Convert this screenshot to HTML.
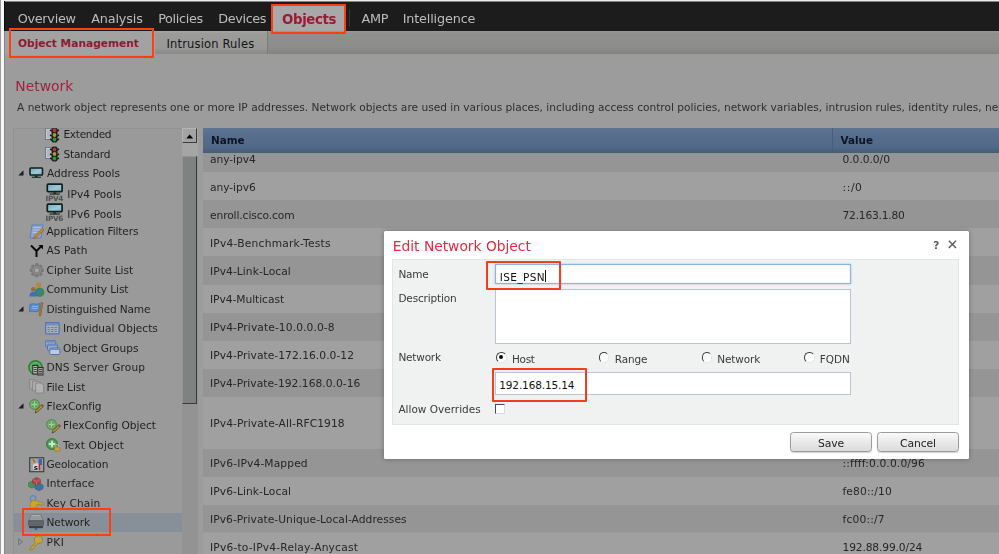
<!DOCTYPE html>
<html>
<head>
<meta charset="utf-8">
<title>Edit Network Object</title>
<style>
html,body{margin:0;padding:0;}
body{width:999px;height:554px;overflow:hidden;position:relative;background:#9c9c9c;font-family:"DejaVu Sans","Liberation Sans",sans-serif;font-size:11px;color:#222;}
.abs{position:absolute;}
#edgeL0{left:0;top:0;width:1px;height:554px;background:#9c9c9c;}
#edgeL1{left:1px;top:0;width:3px;height:554px;background:#f7f7f7;}
#edgeL2{left:4px;top:1px;width:1px;height:553px;background:linear-gradient(#0c0c0c 0,#0c0c0c 30px,#868686 30px);}
#edgeT{left:0;top:0;width:999px;height:1px;background:#ebebeb;}
#edgeT2{left:0;top:1px;width:999px;height:1px;background:#858585;}
#topbar{left:5px;top:2px;width:994px;height:29.300px;background:#1b1c1b;}
#topbar span{position:absolute;top:8.500px;font-size:12.800px;line-height:16px;color:#bdbdbd;white-space:nowrap;}
#objtab{left:272px;top:4px;width:74px;height:28px;background:#a8a8a8;}
#objtab span{position:absolute;left:10px;top:8.300px;font-size:13.300px;line-height:16px;font-weight:bold;color:#9a1b33;letter-spacing:-0.340px;}
#subnav{left:5px;top:31.300px;width:994px;height:22.500px;background:linear-gradient(#999a98 0,#90918f 10%,#8d8e8c 65%,#848583 100%);}
#subtab2{left:155px;top:31.300px;width:112px;height:22.500px;background:linear-gradient(#a6a7a5 0,#9b9c9a 10%,#989997 72%,#8e8f8d 90%,#8a8b89 100%);}
#subtab1{left:5px;top:31.300px;width:150px;height:23.500px;background:#a2a2a2;}
#subnav span,#subtab1 span{position:absolute;white-space:nowrap;line-height:14px;}
.redbox{position:absolute;border:2.400px solid #ff3f10;box-sizing:border-box;}
#h1{left:15.300px;top:76.500px;font-size:13.900px;line-height:18px;color:#a3213f;}
#desc{left:17px;top:100.500px;font-size:10.620px;line-height:14px;color:#2e2e2e;white-space:nowrap;}
#side{left:13px;top:127.500px;width:169px;height:427px;overflow:hidden;background:#9a9a9a;box-sizing:border-box;border-left:1px solid #919191;border-top:1px solid #939393;}
.it{white-space:nowrap;font-size:10.600px;line-height:14px;color:#1f1f1f;}
.ic{line-height:0;}
.ic svg{display:block;}
#sel{left:14px;top:513px;width:168px;height:19.200px;background:#878f98;}
#sbtrack{left:182.200px;top:128px;width:15.400px;height:426px;background:linear-gradient(#a5a5a5 0,#a5a5a5 28px,#939393 28px);}
#sbup{left:182.200px;top:128.200px;width:14.800px;height:15.300px;background:#a3a3a3;box-sizing:border-box;border-style:solid;border-width:1px 1.500px 1.500px 1px;border-color:#b4b4b4 #3b3b3b #3b3b3b #b4b4b4;}
#sbthumb{left:182.200px;top:155.500px;width:14.800px;height:248.300px;background:#7e8281;box-sizing:border-box;border-style:solid;border-width:1px 1.500px 1.500px 1px;border-color:#929594 #3a3a3a #3a3a3a #929594;}
#thead{left:202.500px;top:127.800px;width:797px;height:25.400px;background:linear-gradient(#5d7492 0,#566d8b 30%,#526988 75%,#475b77 100%);}
#thead span{position:absolute;top:5.500px;font-size:10.400px;line-height:14px;font-weight:bold;color:#0d1424;}
.row{position:absolute;left:202.500px;width:797px;}
.row span{position:absolute;font-size:10.700px;line-height:14px;color:#262626;white-space:nowrap;}
.ra{background:#a0a0a0;}
.rb{background:#959595;}
#dlg{left:383.700px;top:230.700px;width:585.300px;height:228.800px;border-radius:1.500px;background:#fff;box-shadow:0 0 5px rgba(0,0,0,.3);}
#dlgtitle{left:9.100px;top:6px;font-size:13.800px;line-height:18px;color:#e8283f;white-space:nowrap;}
#dlgbody{left:8.800px;top:28.800px;width:566.500px;height:165.500px;background:#eff2f0;border:1px solid #e2e6e3;box-sizing:border-box;}
.lbl{position:absolute;font-size:10.500px;line-height:14px;color:#3a3a3a;white-space:nowrap;}
.inp{position:absolute;background:#fff;border:1px solid #b9c4d2;box-sizing:border-box;}
.inp span{position:absolute;left:4.500px;font-size:10.500px;line-height:14px;color:#111;white-space:nowrap;}
.radio{position:absolute;width:10.500px;height:10.500px;border-radius:50%;background:#fff;box-sizing:border-box;border:1.500px solid;border-color:#3c3c3c #e6e6e6 #e6e6e6 #3c3c3c;transform:rotate(0deg);}
.btn{position:absolute;height:20px;box-sizing:border-box;border:1px solid #9c9c9c;border-radius:3.500px;background:linear-gradient(#fafafa,#e9e9e9 50%,#dcdcdc);font-size:10.800px;color:#222;text-align:center;line-height:21px;letter-spacing:-0.130px;box-shadow:0 1px 1px rgba(0,0,0,.18);}
#wrap{position:absolute;left:0;top:0;width:999px;height:554px;overflow:hidden;filter:blur(0.450px);}
</style>
</head>
<body>
<div id="wrap">
<svg width="0" height="0" style="position:absolute"><defs><linearGradient id="mg" x1="0" y1="0" x2="1" y2="1"><stop offset="0" stop-color="#6fa6bb"/><stop offset="0.550" stop-color="#9cc9d6"/><stop offset="1" stop-color="#7fb3c6"/></linearGradient></defs></svg>
<div class="abs" id="topbar">
<span style="left:12.700px;letter-spacing:-0.280px">Overview</span>
<span style="left:86.200px;letter-spacing:-0.150px">Analysis</span>
<span style="left:153.200px;letter-spacing:-0.350px">Policies</span>
<span style="left:213.200px;letter-spacing:-0.350px">Devices</span>
<span style="left:356.500px;letter-spacing:-0.250px">AMP</span>
<span style="left:397.700px;letter-spacing:-0.160px">Intelligence</span>
</div>
<div class="abs" id="objtab"><span>Objects</span></div>
<div class="abs" style="left:349px;top:9px;width:1px;height:18px;background:#363636"></div>
<div class="abs" id="subnav"></div>
<div class="abs" id="subtab2"></div>
<div class="abs" style="left:166.500px;top:36.700px;font-size:11.500px;line-height:14px;letter-spacing:0.160px;color:#141414;white-space:nowrap;z-index:2">Intrusion Rules</div>
<div class="abs" id="subtab1"><span style="left:13px;top:5.500px;font-size:10.650px;font-weight:bold;color:#8e1a30;">Object Management</span></div>
<div class="abs" style="left:267px;top:31.300px;width:1px;height:22.500px;background:#7c7c7c"></div>
<div class="abs" id="edgeT"></div><div class="abs" id="edgeT2"></div>
<div class="abs" id="edgeL0"></div><div class="abs" id="edgeL1"></div><div class="abs" id="edgeL2"></div>
<div class="redbox" style="left:271.300px;top:3.700px;width:75px;height:30.200px;border-width:2.600px"></div>
<div class="redbox" style="left:9.200px;top:28.100px;width:145px;height:29.600px;border-width:2.500px"></div>
<div class="abs" id="h1">Network</div>
<div class="abs" id="desc">A network object represents one or more IP addresses. Network objects are used in various places, including access control policies, network variables, intrusion rules, identity rules, network</div>
<div class="abs" id="side"></div>
<div class="abs" id="sel"></div>
<div class="abs ic" style="left:45px;top:127px;clip-path:inset(1.3px 0 0 0)"><svg width="16" height="16" viewBox="0 0 16 16"><rect x="0.5" y="1.5" width="8" height="11" fill="#c9ccd1" stroke="#6e7787" stroke-width="1"/><path d="M2 4h4M2 6h4M2 8h4M2 10h4" stroke="#8b93a1" stroke-width="0.8"/><rect x="6.5" y="0.5" width="6" height="15" rx="2" fill="#1b1b1b"/><path d="M5 3l2 1M5 8l2 1M5 12l2 1M14 3l-2 1M14 8l-2 1M14 12l-2 1" stroke="#1b1b1b" stroke-width="1.4"/><circle cx="9.5" cy="3.5" r="1.9" fill="#b3323a"/><circle cx="9.5" cy="8" r="1.9" fill="#a99a2e"/><circle cx="9.5" cy="12.5" r="1.9" fill="#2f9632"/></svg></div>
<div class="abs it" style="left:63.5px;top:127.23px;letter-spacing:-0.32px">Extended</div>
<div class="abs ic" style="left:45px;top:145.5px"><svg width="16" height="16" viewBox="0 0 16 16"><rect x="0.5" y="1.5" width="8" height="11" fill="#c9ccd1" stroke="#6e7787" stroke-width="1"/><path d="M2 4h4M2 6h4M2 8h4M2 10h4" stroke="#8b93a1" stroke-width="0.8"/><rect x="6.5" y="0.5" width="6" height="15" rx="2" fill="#1b1b1b"/><path d="M5 3l2 1M5 8l2 1M5 12l2 1M14 3l-2 1M14 8l-2 1M14 12l-2 1" stroke="#1b1b1b" stroke-width="1.4"/><circle cx="9.5" cy="3.5" r="1.9" fill="#b3323a"/><circle cx="9.5" cy="8" r="1.9" fill="#a99a2e"/><circle cx="9.5" cy="12.5" r="1.9" fill="#2f9632"/></svg></div>
<div class="abs it" style="left:63.5px;top:146.73px;letter-spacing:-0.18px">Standard</div>
<div class="abs ic" style="left:29px;top:166.5px"><svg width="16" height="12" viewBox="0 0 16 12"><rect x="1" y="1" width="12.500" height="7" rx="0.800" fill="url(#mg)" stroke="#10201f" stroke-width="1.600"/><rect x="6" y="8.700" width="2.600" height="1.200" fill="#10201f"/><rect x="2.700" y="9.700" width="9.200" height="1.100" fill="#10201f"/></svg></div>
<div class="abs it" style="left:47px;top:166.03px;letter-spacing:0px">Address Pools</div>
<div class="abs ic" style="left:46px;top:181.7px"><svg width="19" height="21" viewBox="0 0 19 21"><rect x="1.300" y="2.200" width="14.800" height="7.400" rx="0.800" fill="url(#mg)" stroke="#10201f" stroke-width="1.700"/><rect x="7.200" y="10.400" width="3" height="1.300" fill="#10201f"/><rect x="3.600" y="11.500" width="10.200" height="1.100" fill="#10201f"/><text x="-0.500" y="19.300" font-family="DejaVu Sans,sans-serif" font-weight="bold" font-size="7.300" fill="#505050" textLength="17.800" lengthAdjust="spacing">IPV4</text></svg></div>
<div class="abs it" style="left:67.3px;top:187.23px;letter-spacing:0.09px">IPv4 Pools</div>
<div class="abs ic" style="left:46px;top:201.7px"><svg width="19" height="21" viewBox="0 0 19 21"><rect x="1.300" y="2.200" width="14.800" height="7.400" rx="0.800" fill="url(#mg)" stroke="#10201f" stroke-width="1.700"/><rect x="7.200" y="10.400" width="3" height="1.300" fill="#10201f"/><rect x="3.600" y="11.500" width="10.200" height="1.100" fill="#10201f"/><text x="-0.500" y="19.300" font-family="DejaVu Sans,sans-serif" font-weight="bold" font-size="7.300" fill="#505050" textLength="17.800" lengthAdjust="spacing">IPV6</text></svg></div>
<div class="abs it" style="left:67.3px;top:206.73px;letter-spacing:0.09px">IPv6 Pools</div>
<div class="abs ic" style="left:28.5px;top:223.5px"><svg width="16" height="16" viewBox="0 0 16 16"><path d="M3 1h11l-2 13H1z" fill="#8da4cf" stroke="#5f7fbe" stroke-width="1"/><path d="M4.5 3.5h7M4 6h7M3.6 8.5h7" stroke="#b9c6e0" stroke-width="0.8"/><path d="M13.5 4.5l1.5 1.5-8 7.5-2.5 1 .8-2.6z" fill="#c98a2b" stroke="#8a5a17" stroke-width="0.6"/></svg></div>
<div class="abs it" style="left:46.5px;top:224.23px;letter-spacing:-0.13px">Application Filters</div>
<div class="abs ic" style="left:29.5px;top:243.5px"><svg width="14" height="14" viewBox="0 0 14 14"><path d="M1 1.5l5.5 5.5v6M6.5 7l5-5" fill="none" stroke="#0a0a0a" stroke-width="2"/><path d="M8.5 1h4.5v4.5z" fill="#0a0a0a"/></svg></div>
<div class="abs it" style="left:46.5px;top:243.23px;letter-spacing:0.07px">AS Path</div>
<div class="abs ic" style="left:28.5px;top:263px"><svg width="16" height="16" viewBox="0 0 16 16"><g transform="translate(7.800 7.300)"><g fill="#787878"><rect x="-1.700" y="-7" width="3.400" height="14" rx="0.900"/><rect x="-1.700" y="-7" width="3.400" height="14" rx="0.900" transform="rotate(45)"/><rect x="-1.700" y="-7" width="3.400" height="14" rx="0.900" transform="rotate(90)"/><rect x="-1.700" y="-7" width="3.400" height="14" rx="0.900" transform="rotate(135)"/></g><circle r="5.500" fill="#7c7c7c"/><circle r="4.300" fill="#8e8e8e"/><circle r="3.300" fill="#808080"/><circle r="2.100" fill="#a4a4a4"/></g></svg></div>
<div class="abs it" style="left:46.5px;top:263.23px;letter-spacing:-0.02px">Cipher Suite List</div>
<div class="abs ic" style="left:28.5px;top:282px"><svg width="16" height="16" viewBox="0 0 16 16"><circle cx="9.500" cy="3.300" r="2.700" fill="#b8863a"/><path d="M5.500 12c0-4.200 1.800-5.800 4.200-5.800s4.800 1.600 4.800 5.800z" fill="#5a8d4a"/><circle cx="10.800" cy="10.300" r="4.600" fill="#3a8a48"/><path d="M8 8.500c1.200-1.800 3.800-2 5.200-.5-.3 1.200-1 1.500-1.800 1.700-.2 1.500-.8 2.800-2 3.800-1.200-1-1.800-3-1.400-5z" fill="#3a7bb0"/><circle cx="4.300" cy="7.300" r="2.300" fill="#9a6a40"/><path d="M0.300 14.500c0-3.200 1.700-4.700 4-4.700s4 1.500 4 4.700z" fill="#3b70b5"/></svg></div>
<div class="abs it" style="left:46.5px;top:282.23px;letter-spacing:-0.09px">Community List</div>
<div class="abs ic" style="left:28.5px;top:302px"><svg width="16" height="15" viewBox="0 0 16 15"><path d="M1 2.500c3-2 6 1 10-1l-1.200 7.500c-4 2-6.500-1-9.300 1z" fill="#5b8fd0" stroke="#3d69ad" stroke-width="0.700"/><path d="M3 4.500c2-.8 4 .6 6-.2M2.800 6.500c2-.8 4 .6 6-.2" stroke="#9cc0ea" stroke-width="0.800" fill="none"/><path d="M12.300 0.500l1.700.4-2.300 13-1.700-.4z" fill="#b07a2e" stroke="#7b5219" stroke-width="0.500"/></svg></div>
<div class="abs it" style="left:46.5px;top:302.03px;letter-spacing:-0.17px">Distinguished Name</div>
<div class="abs ic" style="left:45px;top:322px"><svg width="15" height="13" viewBox="0 0 15 13"><rect x="0.600" y="0.600" width="13.500" height="11.300" rx="1" fill="#aab1be" stroke="#5274b0" stroke-width="1.300"/><rect x="1.200" y="1.200" width="12.300" height="2.300" fill="#6e8cc4"/><path d="M2.500 5.500h2.500M6 5.500h2.500M9.500 5.500h2.500M2.500 7.500h2.500M6 7.500h2.500M9.500 7.500h2.500M2.500 9.500h2.500M6 9.500h2.500M9.500 9.500h2.500" stroke="#6f7c94" stroke-width="1"/></svg></div>
<div class="abs it" style="left:63px;top:321.23px;letter-spacing:-0.01px">Individual Objects</div>
<div class="abs ic" style="left:45px;top:340px"><svg width="16" height="16" viewBox="0 0 16 16"><rect x="0.600" y="0.600" width="10" height="6.500" rx="0.800" fill="#a3adbe" stroke="#5274b0" stroke-width="1"/><rect x="0.600" y="0.600" width="10" height="2" fill="#6e8cc4"/><rect x="2.600" y="4.200" width="10" height="6.500" rx="0.800" fill="#a3adbe" stroke="#5274b0" stroke-width="1"/><rect x="2.600" y="4.200" width="10" height="2" fill="#6e8cc4"/><rect x="4.800" y="8" width="10" height="6.500" rx="0.800" fill="#c4c9d2" stroke="#5274b0" stroke-width="1"/><rect x="4.800" y="8" width="10" height="2" fill="#6e8cc4"/></svg></div>
<div class="abs it" style="left:63px;top:340.93px;letter-spacing:-0.02px">Object Groups</div>
<div class="abs ic" style="left:28.2px;top:359.5px"><svg width="16" height="16" viewBox="0 0 16 16"><circle cx="7.500" cy="7.500" r="7.400" fill="#2e8238"/><circle cx="7.500" cy="7.500" r="5.700" fill="#68b466"/><circle cx="7.500" cy="7.500" r="4" fill="#429648"/><rect x="4.800" y="5.500" width="5" height="8.500" fill="#b9b9b9" stroke="#2a2a2a" stroke-width="1"/><rect x="9.800" y="7.500" width="5.200" height="7.500" fill="#a9a9a9" stroke="#2a2a2a" stroke-width="1"/><path d="M5.800 7.500h3M5.800 9.500h3M5.800 11.500h3M10.800 9.500h3.200M10.800 11.500h3.200M10.800 13.300h3.200" stroke="#333" stroke-width="0.900"/></svg></div>
<div class="abs it" style="left:46.5px;top:360.03px;letter-spacing:0.13px">DNS Server Group</div>
<div class="abs ic" style="left:28.5px;top:379px"><svg width="16" height="15" viewBox="0 0 16 15"><path d="M0.600 0.600h5.500l2.500 2.500v7h-8z" fill="#a9a9a9" stroke="#858585" stroke-width="0.900"/><path d="M3.600 2.200h5.500l2.500 2.500v7h-8z" fill="#aeaeae" stroke="#858585" stroke-width="0.900"/><path d="M6.600 4h5.500l2.500 2.500v7.500h-8z" fill="#b3b3b3" stroke="#858585" stroke-width="0.900"/></svg></div>
<div class="abs it" style="left:46.5px;top:379.53px;letter-spacing:-0.1px">File List</div>
<div class="abs ic" style="left:29px;top:399px"><svg width="16" height="15" viewBox="0 0 16 15"><circle cx="5.500" cy="5.500" r="5" fill="#5d9a58" stroke="#4a8a48" stroke-width="0.800"/><circle cx="5.500" cy="5.500" r="3.700" fill="none" stroke="#7fb578" stroke-width="1"/><path d="M5.500 2.500v6M2.500 5.500h6" stroke="#a3cf9c" stroke-width="1.300"/><path d="M13 5.500l1.500 1.500-6 6-2.300.9.800-2.400z" fill="#c89a2e" stroke="#3a2c12" stroke-width="0.700"/><path d="M12.300 6.200l1.500 1.500" stroke="#a03a3a" stroke-width="1.200"/></svg></div>
<div class="abs it" style="left:46.5px;top:398.73px;letter-spacing:-0.06px">FlexConfig</div>
<div class="abs ic" style="left:46px;top:418.5px"><svg width="16" height="15" viewBox="0 0 16 15"><circle cx="5.500" cy="5.500" r="5" fill="#5d9a58" stroke="#4a8a48" stroke-width="0.800"/><circle cx="5.500" cy="5.500" r="3.700" fill="none" stroke="#7fb578" stroke-width="1"/><path d="M5.500 2.500v6M2.500 5.500h6" stroke="#a3cf9c" stroke-width="1.300"/><path d="M13 5.500l1.500 1.500-6 6-2.300.9.800-2.400z" fill="#c89a2e" stroke="#3a2c12" stroke-width="0.700"/><path d="M12.300 6.200l1.500 1.500" stroke="#a03a3a" stroke-width="1.200"/></svg></div>
<div class="abs it" style="left:63px;top:418.23px;letter-spacing:-0.04px">FlexConfig Object</div>
<div class="abs ic" style="left:46px;top:438px"><svg width="16" height="15" viewBox="0 0 16 15"><circle cx="6" cy="6" r="5.600" fill="#3f9048" stroke="#33803c" stroke-width="0.800"/><circle cx="6" cy="6" r="4.200" fill="#58a85c"/><path d="M6 2.800v6.400M2.800 6h6.400" stroke="#d0e6cc" stroke-width="1.900"/><rect x="8.500" y="9" width="5.500" height="4" rx="0.800" fill="#c9a23a" stroke="#94721d" stroke-width="0.600"/><path d="M9.800 9v-1.200a1.500 1.500 0 0 1 3 0v1.200" fill="none" stroke="#b8b8b8" stroke-width="0.900"/></svg></div>
<div class="abs it" style="left:63px;top:437.73px;letter-spacing:0.16px">Text Object</div>
<div class="abs ic" style="left:28.5px;top:457px"><svg width="16" height="16" viewBox="0 0 16 16"><rect x="0.700" y="0.700" width="14" height="14" fill="#9aa3a8" stroke="#3c4246" stroke-width="1.200"/><path d="M3 3l3 4" stroke="#c8a030" stroke-width="1.500"/><path d="M4 2.500l2 3" stroke="#b03030" stroke-width="1"/><rect x="9.500" y="2" width="3.500" height="6" fill="#3e63b0"/><circle cx="7.500" cy="10" r="3.700" fill="#d8d8d8"/><text x="4.800" y="13" font-family="DejaVu Sans,sans-serif" font-weight="bold" font-size="7" fill="#0a0a0a">s</text><rect x="9.600" y="7" width="1.600" height="6" fill="#c02020"/></svg></div>
<div class="abs it" style="left:46.5px;top:457.03px;letter-spacing:-0.14px">Geolocation</div>
<div class="abs ic" style="left:27.8px;top:477.3px"><svg width="16" height="14" viewBox="0 0 16 15.600" preserveAspectRatio="none"><path d="M0.500 6.500l3.500-2 3.500 2v4l-3.500 2-3.500-2z" fill="#4d8f58" stroke="#3a7546" stroke-width="0.600"/><path d="M7 9l4-2.200 4 2.200v4l-4 2.200-4-2.200z" fill="#3b74a3" stroke="#2c5a82" stroke-width="0.600"/><path d="M4.500 2.700l4-2.200 4 2.200v4l-4 2.200-4-2.200z" fill="#b3444c" stroke="#8c3038" stroke-width="0.600"/><path d="M4.500 2.700l4 2.200 4-2.200M8.500 4.900v4" fill="none" stroke="#c9787d" stroke-width="0.700"/></svg></div>
<div class="abs it" style="left:46.5px;top:476.23px;letter-spacing:0.04px">Interface</div>
<div class="abs ic" style="left:28.5px;top:495px"><svg width="16" height="14" viewBox="0 0 16 14"><circle cx="4" cy="3.500" r="2.800" fill="none" stroke="#5f86c0" stroke-width="1.300"/><path d="M2 13c-1.500-3-1-6.500 2-7.500 2-.6 3.500.5 5 1l6 2-1 1.800-5-1.200c-1 .3-1.500 1.500-1.500 3.900z" fill="#c9a62c" stroke="#9a7a16" stroke-width="0.600"/></svg></div>
<div class="abs it" style="left:46.5px;top:495.73px;letter-spacing:0.11px">Key Chain</div>
<div class="abs ic" style="left:28.3px;top:513.7px"><svg width="16" height="17" viewBox="0 0 16 17"><path d="M3 0.800h10l2.200 6h-14.400z" fill="#959a9b" stroke="#6c7173" stroke-width="0.700"/><path d="M3.500 1.500h9" stroke="#b4b8b9" stroke-width="0.800"/><rect x="0.600" y="6.800" width="14.800" height="4.400" fill="#626869" stroke="#4d5254" stroke-width="0.700"/><rect x="1" y="12" width="14" height="2.200" fill="#3c4143"/><rect x="6.600" y="14" width="2.600" height="2" rx="0.800" fill="#2f62c4"/></svg></div>
<div class="abs it" style="left:46.5px;top:515.33px;letter-spacing:-0.1px">Network</div>
<div class="abs ic" style="left:28.5px;top:534.5px"><svg width="16" height="16" viewBox="0 0 16 16"><path d="M9.500 1a4 4 0 0 1 3.500 6c-1 1.200-2.700 1.600-4 1l-5.500 6.500-2.500.5.300-2.600 1.500-.3.200-1.600 1.600-.2 1.700-2.600a4 4 0 0 1 3.200-6.700z" fill="#c7a73a" stroke="#927619" stroke-width="0.700"/><circle cx="10.800" cy="4.200" r="1.100" fill="#a0a0a0"/></svg></div>
<div class="abs it" style="left:46.5px;top:534.73px;letter-spacing:0.41px">PKI</div>
<svg class="abs" style="left:17.5px;top:170.2px" width="6" height="6" viewBox="0 0 6 6"><path d="M5.500 0.300v5.200h-5.200z" fill="#1c1c1c"/></svg>
<svg class="abs" style="left:17.5px;top:306.2px" width="6" height="6" viewBox="0 0 6 6"><path d="M5.500 0.300v5.200h-5.200z" fill="#1c1c1c"/></svg>
<svg class="abs" style="left:17.5px;top:403.2px" width="6" height="6" viewBox="0 0 6 6"><path d="M5.500 0.300v5.200h-5.200z" fill="#1c1c1c"/></svg>
<svg class="abs" style="left:18.3px;top:537.8px" width="6" height="8" viewBox="0 0 6 8"><path d="M0.600 0.800l4 3-4 3z" fill="none" stroke="#6d6d6d" stroke-width="0.900"/></svg>
<div class="redbox" style="left:22px;top:507.600px;width:88.700px;height:28px;border-width:2.500px"></div>
<div class="abs" id="sbtrack"></div>
<div class="abs" id="sbup"><svg width="13" height="13" style="position:absolute;left:0;top:0"><path d="M3.200 9.500L10.200 9.500L6.700 5.500Z" fill="#000"/></svg></div>
<div class="abs" id="sbthumb"></div>
<div class="abs" id="thead"><span style="left:8.500px">Name</span><span style="left:638px">Value</span><div class="abs" style="left:629.500px;top:0;width:1px;height:24px;background:#475d7c"></div></div>
<div class="row rb" style="top:152.5px;height:19px"><span style="left:7.500px;top:0.2px;letter-spacing:-0.05px">any-ipv4</span><span style="left:640px;top:0.2px;letter-spacing:-0.04px">0.0.0.0/0</span></div>
<div class="row ra" style="top:171.5px;height:28.5px"><span style="left:7.500px;top:9px;letter-spacing:-0.05px">any-ipv6</span><span style="left:640px;top:9px;letter-spacing:0.6px">::/0</span></div>
<div class="row rb" style="top:200px;height:28px"><span style="left:7.500px;top:8.5px;letter-spacing:-0.11px">enroll.cisco.com</span><span style="left:640px;top:8.5px;letter-spacing:-0.23px">72.163.1.80</span></div>
<div class="row ra" style="top:228px;height:28px"><span style="left:7.500px;top:8.5px;letter-spacing:0.21px">IPv4-Benchmark-Tests</span></div>
<div class="row rb" style="top:256px;height:28.5px"><span style="left:7.500px;top:8.7px;letter-spacing:0.05px">IPv4-Link-Local</span></div>
<div class="row ra" style="top:284.5px;height:28px"><span style="left:7.500px;top:8.4px;letter-spacing:-0.06px">IPv4-Multicast</span></div>
<div class="row rb" style="top:312.5px;height:28.5px"><span style="left:7.500px;top:8.7px;letter-spacing:0.09px">IPv4-Private-10.0.0.0-8</span></div>
<div class="row ra" style="top:341px;height:28px"><span style="left:7.500px;top:8.2px;letter-spacing:0.04px">IPv4-Private-172.16.0.0-12</span></div>
<div class="row rb" style="top:369px;height:27.5px"><span style="left:7.500px;top:8.4px;letter-spacing:0.02px">IPv4-Private-192.168.0.0-16</span></div>
<div class="row ra" style="top:396.5px;height:52px"><span style="left:7.500px;top:20.1px;letter-spacing:0.08px">IPv4-Private-All-RFC1918</span></div>
<div class="row rb" style="top:448.5px;height:28.2px"><span style="left:7.500px;top:8.7px;letter-spacing:0.12px">IPv6-IPv4-Mapped</span><span style="left:640px;top:8.7px;letter-spacing:0.14px">::ffff:0.0.0.0/96</span></div>
<div class="row ra" style="top:476.7px;height:28px"><span style="left:7.500px;top:8px;letter-spacing:0.07px">IPv6-Link-Local</span><span style="left:640px;top:8px;letter-spacing:0.11px">fe80::/10</span></div>
<div class="row rb" style="top:504.7px;height:27.8px"><span style="left:7.500px;top:8.8px;letter-spacing:0.04px">IPv6-Private-Unique-Local-Addresses</span><span style="left:640px;top:8.8px;letter-spacing:0.16px">fc00::/7</span></div>
<div class="row ra" style="top:532.5px;height:27.5px"><span style="left:7.500px;top:8px;letter-spacing:0.18px">IPv6-to-IPv4-Relay-Anycast</span><span style="left:640px;top:8px;letter-spacing:-0.15px">192.88.99.0/24</span></div>
<div class="abs" id="dlg">
<div class="abs" id="dlgtitle">Edit Network Object</div>
<div class="abs" style="left:549.500px;top:7px;font-size:10.500px;line-height:14px;font-weight:bold;color:#5a5a5a;">?</div>
<svg class="abs" style="left:564.500px;top:9.300px" width="9" height="9" viewBox="0 0 9 9"><path d="M0.800 0.800L8 8M8 0.800L0.800 8" stroke="#5f5f5f" stroke-width="1.500" fill="none"/></svg>
<div class="abs" id="dlgbody"></div>
<div class="lbl" style="left:14.700px;top:36.300px;letter-spacing:-0.250px">Name</div>
<div class="lbl" style="left:14.700px;top:60.300px;letter-spacing:-0.140px">Description</div>
<div class="lbl" style="left:14.700px;top:119.300px;letter-spacing:-0.190px">Network</div>
<div class="lbl" style="left:14.700px;top:171.300px">Allow Overrides</div>
<div class="inp" style="left:111.300px;top:33.800px;width:356px;height:20px;border-color:#86b6e6;box-shadow:0 0 2px #9cc4ee,inset 0 0 1px #9cc4ee"><span style="left:3.800px;top:4.100px;letter-spacing:0.400px">ISE_PSN</span><div class="abs" style="left:49.300px;top:4.300px;width:1px;height:12.500px;background:#111"></div></div>
<div class="inp" style="left:111.300px;top:58px;width:356px;height:55px;"></div>
<div class="radio" style="left:112.800px;top:121.600px"><div class="abs" style="left:1.900px;top:1.900px;width:3.900px;height:3.900px;border-radius:50%;background:#0c0c0c"></div></div>
<div class="lbl" style="left:128.300px;top:121.300px;letter-spacing:-0.300px">Host</div>
<div class="radio" style="left:215.300px;top:121.600px"></div>
<div class="lbl" style="left:231px;top:121.300px;letter-spacing:-0.120px">Range</div>
<div class="radio" style="left:318px;top:121.600px"></div>
<div class="lbl" style="left:333.600px;top:121.300px;letter-spacing:-0.150px">Network</div>
<div class="radio" style="left:420.500px;top:121.600px"></div>
<div class="lbl" style="left:436px;top:121.300px">FQDN</div>
<div class="inp" style="left:111.300px;top:141.800px;width:356px;height:22.300px;"><span style="left:3.300px;top:4.800px;letter-spacing:-0.140px">192.168.15.14</span></div>
<div class="abs" style="left:111.300px;top:173.300px;width:10.500px;height:10.500px;background:#fff;box-sizing:border-box;border-style:solid;border-width:1.800px 1px 1px 1.800px;border-color:#4a4a4a #dcdcdc #dcdcdc #4a4a4a"></div>
<div class="btn" style="left:406.500px;top:201.300px;width:81.500px">Save</div>
<div class="btn" style="left:493.300px;top:201.300px;width:82px">Cancel</div>
<div class="redbox" style="left:102.400px;top:29.900px;width:74.700px;height:29.500px;border-color:#f43c1e;border-width:2.600px;border-radius:1px"></div>
<div class="redbox" style="left:108.200px;top:137.500px;width:95.200px;height:33.600px;border-color:#f43c1e;border-width:2.600px;border-radius:1px"></div>
</div>
</div>
</body>
</html>
